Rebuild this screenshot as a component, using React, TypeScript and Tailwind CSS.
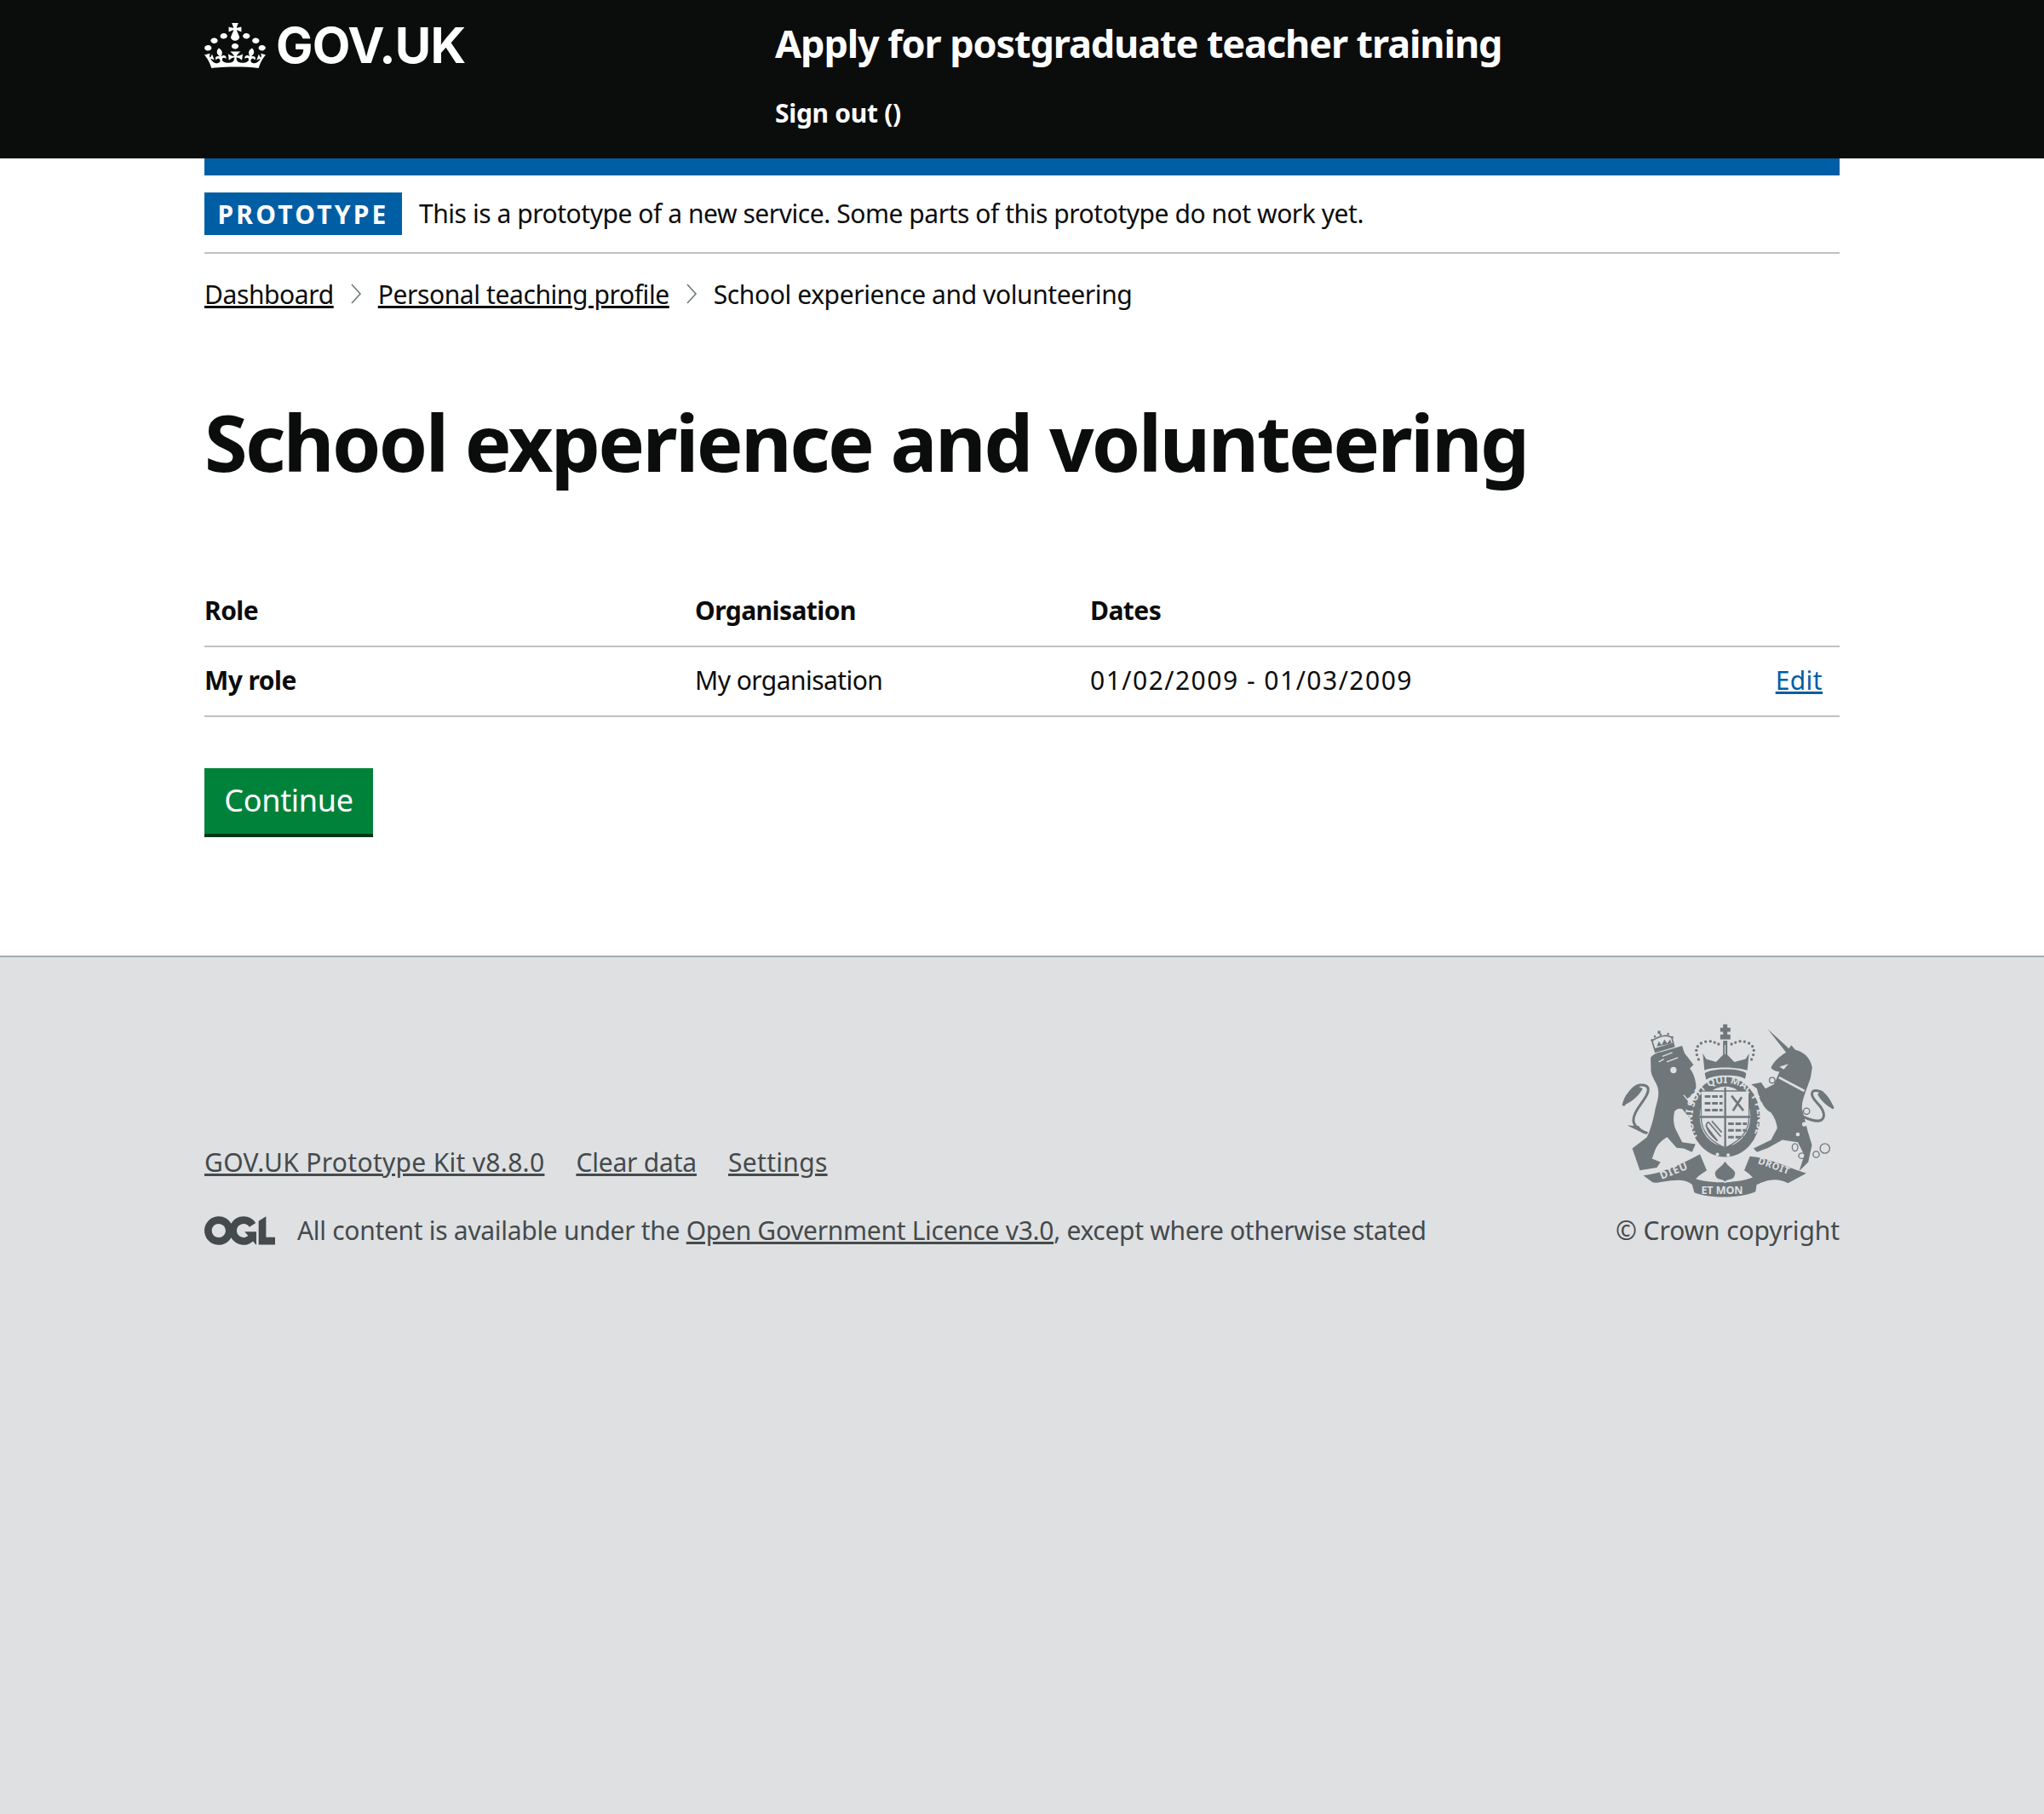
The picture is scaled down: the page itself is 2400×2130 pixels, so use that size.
import React from 'react';

const font = "font-['Noto_Sans',sans-serif]";

function Crown() {
  return (
    <svg viewBox="0 0 32 30" preserveAspectRatio="none" className="w-[72px] h-[53px] fill-white">
      <path
        fillRule="evenodd"
        d="M22.6 10.4c-1 .4-2-.1-2.4-1-.4-.9.1-2 1-2.4.9-.4 2 .1 2.4 1s-.1 2-1 2.4m-5.9 6.7c-.9.4-2-.1-2.4-1-.4-.9.1-2 1-2.4.9-.4 2 .1 2.4 1s-.1 2-1 2.4m10.8-3.7c-1 .4-2-.1-2.4-1-.4-.9.1-2 1-2.4.9-.4 2 .1 2.4 1s0 2-1 2.4m3.3 4.8c-1 .4-2-.1-2.4-1-.4-.9.1-2 1-2.4.9-.4 2 .1 2.4 1s-.1 2-1 2.4M17 4.7l2.3 1.2V2.5l-2.3.7-.2-.2.9-3h-3.4l.9 3-.2.2c-.1.1-2.3-.7-2.3-.7v3.4L15 4.7c.1.1.1.2.2.2l-1.3 4c-.1.2-.1.4-.1.6 0 1.1.8 2 1.9 2.2h.7c1-.2 1.9-1.1 1.9-2.2 0-.2 0-.4-.1-.6l-1.3-4c-.1-.1 0-.2.1-.2m-7.6 5.7c.9.4 2-.1 2.4-1 .4-.9-.1-2-1-2.4-.9-.4-2 .1-2.4 1s0 2 1 2.4m-5 3c.9.4 2-.1 2.4-1 .4-.9-.1-2-1-2.4-.9-.4-2 .1-2.4 1s.1 2 1 2.4m-3.2 4.8c.9.4 2-.1 2.4-1 .4-.9-.1-2-1-2.4-.9-.4-2 .1-2.4 1s0 2 1 2.4m14.8 11c4.4 0 8.6.3 12.3.8 1.1-4.5 2.4-7 3.7-8.8l-2.5-.9c.2 1.3.3 1.9 0 2.7-.4-.4-.8-1.1-1.1-2.3l-1.2 4c.7-.5 1.3-.8 2-.9-1.1 2.5-2.6 3.1-3.5 3-1.1-.2-1.7-1.2-1.5-2.1.3-1.2 1.5-1.5 2.1-.1 1.1-2.3-.8-3-2-2.3 1.9-1.9 2.1-3.5.6-5.6-2.1 1.6-2.1 3.2-1.2 5.5-1.2-1.4-3.2-.6-2.5 1.6.9-1.4 2.1-.5 1.9.8-.2 1.1-1.7 2.1-3.5 1.9-2.7-.2-2.9-2.1-2.9-3.6.7-.1 1.9.5 2.9 1.9l.4-4.3c-1.1 1.1-2.1 1.4-3.2 1.4.4-1.2 2.1-3 2.1-3h-5.4s1.7 1.9 2.1 3c-1.1 0-2.1-.2-3.2-1.4l.4 4.3c1-1.4 2.2-2 2.9-1.9-.1 1.5-.2 3.4-2.9 3.6-1.9.2-3.4-.8-3.5-1.9-.2-1.3 1-2.2 1.9-.8.7-2.3-1.2-3-2.5-1.6.9-2.2.9-3.9-1.2-5.5-1.5 2-1.3 3.7.6 5.6-1.2-.7-3.1 0-2 2.3.6-1.4 1.8-1.1 2.1.1.2.9-.3 1.9-1.5 2.1-.9.2-2.4-.5-3.5-3 .6 0 1.2.3 2 .9l-1.2-4c-.3 1.1-.7 1.9-1.1 2.3-.3-.8-.2-1.4 0-2.7l-2.9.9C1.3 23 2.6 25.5 3.7 30c3.7-.5 7.9-.8 12.3-.8"
      />
    </svg>
  );
}

function Ogl() {
  return (
    <svg viewBox="0 0 483.2 195.7" className="w-[83px] h-[34px] shrink-0 fill-[#454a4c]">
      <path d="M421.5 142.8V.1l-50.7 32.3v161.1h112.4v-50.7zm-122.3-9.6A47.12 47.12 0 0 1 221 97.8c0-26 21.1-47.1 47.1-47.1 16.7 0 31.4 8.7 39.7 21.8l42.7-27.2A97.63 97.63 0 0 0 268.1 0c-36.5 0-68.3 20.1-85.1 49.7A98 98 0 0 0 97.8 0C43.9 0 0 43.9 0 97.8s43.9 97.8 97.8 97.8c36.5 0 68.3-20.1 85.1-49.7a97.76 97.76 0 0 0 149.6 25.4l19.4 22.2h3v-87.8h-80l24.3 27.5zM97.8 145c-26 0-47.1-21.1-47.1-47.1s21.1-47.1 47.1-47.1 47.2 21 47.2 47S123.8 145 97.8 145" />
    </svg>
  );
}

// royal arms, coordinates taken from the 3x crop
function Crest() {
  const c = '#6f777b';
  const bg = '#dee0e2';
  const dots: [number, number][] = [
    [403, 196], [397, 180], [395, 164], [400, 150], [412, 139], [428, 133], [445, 132], [460, 136], [474, 142],
    [520, 142], [534, 136], [550, 132], [566, 133], [582, 139], [594, 150], [599, 164], [597, 180], [591, 196],
  ];
  const lionDots: [number, number][] = [[238, 128], [248, 115], [268, 108], [295, 106], [310, 118]];
  return (
    <svg viewBox="130 70 755 615" className="w-[250px] h-[204px]">
      {/* lion */}
      <path fill={c} d="M233 190 C240 180 255 172 270 170 L345 148 C350 165 352 175 362 185 L385 215 L372 228 C385 245 392 265 394 290 C394 310 385 325 362 335 L405 405 L398 425 L372 405 L345 372 C335 368 325 372 318 380 C312 405 314 425 322 445 L345 490 L392 497 L380 525 L350 512 L325 510 L292 472 C275 480 260 495 250 515 L238 548 L268 560 L255 580 L195 590 L168 512 L220 472 C235 440 245 400 250 370 C258 340 265 320 258 295 C250 270 232 255 234 225 Z" />
      <path fill="none" stroke={c} strokeWidth="9" d="M222 458 C150 432 168 395 200 352 C232 310 235 285 195 287 C165 292 145 335 137 360" />
      <path fill={c} d="M190 292 C150 300 135 340 132 362 C160 350 190 330 205 300 Z M150 430 L190 432 L215 462 L180 445 Z" />
      {/* lion crown */}
      <path fill="none" stroke={c} strokeWidth="5" d="M250 170 L238 130 C265 112 290 108 308 118 L316 150 Z" />
      <path fill={c} d="M244 158 L312 138 L316 150 L250 170 Z M258 105 H268 V95 H258 Z" />
      {lionDots.map(([x, y]) => <circle key={`${x}-${y}`} cx={x} cy={y} r="4" fill={c} />)}
      <path fill={c} d="M255 150 L262 132 L272 145 L282 125 L292 140 L302 125 L308 140 Z" />
      <circle cx="314" cy="234" r="11" fill={bg} />
      <path fill="none" stroke={bg} strokeWidth="4" d="M275 185 L310 172 M290 205 L330 190 M262 205 L280 195" />
      <path fill="none" stroke={bg} strokeWidth="4" d="M350 322 L408 395" />
      {/* unicorn */}
      <path fill={c} d="M648 88 L726 160 L714 172 Z" />
      <path fill={c} d="M660 226 C668 205 690 185 712 172 L732 146 L746 162 C775 168 800 190 806 225 L800 262 L782 312 C775 335 768 350 770 372 L790 450 L805 500 L792 560 L760 592 L778 535 L755 490 L700 482 L650 510 L610 525 L598 512 L660 482 L682 440 C680 420 672 400 660 385 C640 375 625 350 618 330 L610 300 L590 285 L625 278 L640 300 L670 285 L690 240 C680 238 668 238 660 226 Z" />
      <path fill="none" stroke={c} strokeWidth="9" d="M775 400 C860 440 860 385 825 352 C790 315 805 298 840 312 C860 330 870 350 880 370" />
      <path fill={c} d="M835 308 C860 318 875 345 882 372 C860 365 835 340 825 320 Z" />
      <path fill="none" stroke={bg} strokeWidth="8" d="M688 260 L778 308" />
      <path fill={bg} d="M690 222 L722 212 L705 232 Z" />
      <g fill="none" stroke={c} strokeWidth="4">
        <circle cx="664" cy="270" r="10" />
        <circle cx="652" cy="356" r="12" />
        <circle cx="786" cy="380" r="11" />
        <ellipse cx="745" cy="508" rx="10" ry="13" />
        <ellipse cx="770" cy="538" rx="12" ry="10" />
        <circle cx="820" cy="533" r="11" />
        <circle cx="851" cy="512" r="17" />
      </g>
      <circle cx="778" cy="426" r="8" fill={bg} />
      <circle cx="755" cy="462" r="7" fill={bg} />
      {/* crown */}
      <path fill={c} d="M490 72 H505 V84 H516 V98 H505 V108 H516 L516 125 H480 L480 108 H490 V98 H480 V84 H490 Z" />
      <path fill={c} d="M490 130 H505 V180 L530 205 L570 195 L582 175 L576 235 C540 222 450 222 424 235 L418 175 L430 195 L465 205 L490 180 Z" />
      <path fill="none" stroke={bg} strokeWidth="3" d="M497 145 V178" />
      {dots.map(([x, y]) => <circle key={`${x}-${y}`} cx={x} cy={y} r="5" fill={c} />)}
      <path fill={c} d="M425 245 C450 226 545 226 572 245 L568 265 C540 248 455 248 430 268 Z" />
      {/* garter and shield */}
      <ellipse cx="497" cy="400" rx="124" ry="142" fill={c} />
      <ellipse cx="497" cy="398" rx="90" ry="106" fill={bg} />
      <path fill={bg} stroke={c} strokeWidth="4" d="M412 308 H582 V400 C582 460 540 490 497 510 C454 490 412 460 412 400 Z" />
      <path fill={c} d="M407 396 H587 V404 H407 Z M494 295 H501 V515 H494 Z" />
      <path fill="none" stroke={c} strokeWidth="9" strokeDasharray="20 6" d="M425 328 H488 M425 352 H488 M425 376 H488 M508 424 H574 M508 448 H574 M508 472 H565" />
      <path fill="none" stroke={c} strokeWidth="5" d="M438 418 L482 470 M450 415 L485 455 M428 430 L470 485 M438 418 C425 425 428 450 470 485" />
      <path fill="none" stroke={c} strokeWidth="8" d="M520 325 L562 378 M556 330 L525 378" />
      <defs>
        <path id="garter" d="M405 480 C350 400 395 280 497 280 C600 280 640 400 590 480" />
      </defs>
      <text fill={bg} fontFamily="Noto Sans, sans-serif" fontWeight="700" fontSize="36">
        <textPath href="#garter" startOffset="2%">HONI SOIT QUI MAL Y PENSE</textPath>
      </text>
      <circle cx="470" cy="533" r="6" fill={bg} />
      <circle cx="508" cy="535" r="6" fill={bg} />
      {/* motto scroll */}
      <path fill={c} d="M207 608 C270 600 340 570 408 532 L432 590 C400 610 385 625 380 640 C340 605 260 640 240 632 Z" />
      <path fill={c} d="M585 540 C650 545 720 580 785 600 L720 635 C680 612 640 625 610 640 C600 615 580 600 565 590 Z" />
      <path fill={c} d="M372 610 C420 640 560 640 615 605 L605 665 C550 690 440 690 388 668 Z" />
      <path fill={c} stroke={bg} strokeWidth="4" d="M497 555 C520 590 545 585 530 615 C520 628 505 620 497 632 C489 620 474 628 464 615 C449 585 474 590 497 555 Z" />
      <text x="272" y="622" fill={bg} fontFamily="Noto Sans, sans-serif" fontWeight="700" fontSize="38" transform="rotate(-22 272 622)" letterSpacing="3">DIEU</text>
      <text x="612" y="565" fill={bg} fontFamily="Noto Sans, sans-serif" fontWeight="700" fontSize="34" transform="rotate(20 612 565)" letterSpacing="2">DROIT</text>
      <text x="412" y="672" fill={bg} fontFamily="Noto Sans, sans-serif" fontWeight="700" fontSize="38">ET MON</text>
    </svg>
  );
}

function Chevron() {
  return (
    <svg viewBox="0 0 14 26" className="w-[14px] h-[26px] mx-[19px] shrink-0">
      <path d="M2 2 L12 13 L2 24" fill="none" stroke="#6f777b" strokeWidth="1.6" />
    </svg>
  );
}

export default function App() {
  return (
    <div className={`${font} min-h-[2130px] flex flex-col bg-white text-[#0b0c0c] text-[30px] tracking-[-0.3px]`}>
      <header className="bg-[#0b0c0c] h-[186px] text-white">
        <div className="w-[1920px] mx-auto flex">
          <div className="w-[670px] flex items-center h-[106px]">
            <Crown />
            <span className="ml-[12px] text-[58px] leading-none font-bold font-['Inter',sans-serif] tracking-[-0.8px]">GOV.UK</span>
          </div>
          <div className="flex flex-col">
            <div className="h-[102px] flex items-center text-[45px] font-bold tracking-[-1.1px]">Apply for postgraduate teacher training</div>
            <div className="mt-[10px] text-[30px] leading-[42px] font-bold">Sign out ()</div>
          </div>
        </div>
      </header>

      <main className="w-[1920px] mx-auto">
        <div className="h-[20px] bg-[#005ea5]" />
        <div className="h-[92px] flex items-center border-b-2 border-[#bfc1c3]">
          <span className="bg-[#005ea5] text-white font-bold h-[50px] w-[232px] flex items-center justify-center tracking-[3.2px] text-[30px]">PROTOTYPE</span>
          <span className="ml-[20px] pb-[2px] tracking-[-0.45px]">This is a prototype of a new service. Some parts of this prototype do not work yet.</span>
        </div>
        <nav className="h-[97px] flex items-center pb-[3px] tracking-[-0.4px]">
          <a className="underline">Dashboard</a>
          <Chevron />
          <a className="underline">Personal teaching profile</a>
          <Chevron />
          <span>School experience and volunteering</span>
        </nav>
        <h1 className="mt-[70px] text-[92px] leading-[108px] font-bold tracking-[-2.65px]">School experience and volunteering</h1>
        <table className="mt-[104px] w-full border-collapse table-fixed tracking-[-0.55px]">
          <thead>
            <tr className="border-b-2 border-[#bfc1c3] h-[82px] text-left">
              <th className="w-[576px] font-bold pb-[2px]">Role</th>
              <th className="w-[464px] font-bold pb-[2px]">Organisation</th>
              <th className="font-bold pb-[2px]">Dates</th>
              <th className="w-[200px]"></th>
            </tr>
          </thead>
          <tbody>
            <tr className="border-b-2 border-[#bfc1c3] h-[82px]">
              <td className="font-bold pb-[4px]">My role</td>
              <td className="pb-[4px]">My organisation</td>
              <td className="pb-[4px] tracking-[1.5px]">01/02/2009 - 01/03/2009</td>
              <td className="text-right pr-[20px] pb-[4px]"><a className="underline text-[#005ea5] tracking-[0.4px]">Edit</a></td>
            </tr>
          </tbody>
        </table>
        <button className="mt-[60px] mb-[139px] block h-[81px] w-[198px] pb-[2px] bg-[#00823b] text-white text-[36px] border-b-[4px] border-[#003618] tracking-[-0.3px]">Continue</button>
      </main>

      <footer className="flex-1 bg-[#dee0e2] border-t-2 border-[#a1acb2] text-[#454a4c]">
        <div className="w-[1920px] mx-auto pt-[78px] flex justify-between items-end">
          <div className="flex flex-col pb-[5px]">
            <div className="flex gap-[37px]">
              <a className="underline tracking-[0.3px]">GOV.UK Prototype Kit v8.8.0</a>
              <a className="underline tracking-[-0.2px]">Clear data</a>
              <a className="underline tracking-[0.3px]">Settings</a>
            </div>
            <div className="mt-[35px] flex items-center">
              <Ogl />
              <span className="ml-[26px]">All content is available under the <a className="underline">Open Government Licence v3.0</a>, except where otherwise stated</span>
            </div>
          </div>
          <div className="flex flex-col items-end">
            <div className="mr-[6px]"><Crest /></div>
            <div className="mt-[16px] pb-[5px] tracking-[-0.1px]">© Crown copyright</div>
          </div>
        </div>
      </footer>
    </div>
  );
}
